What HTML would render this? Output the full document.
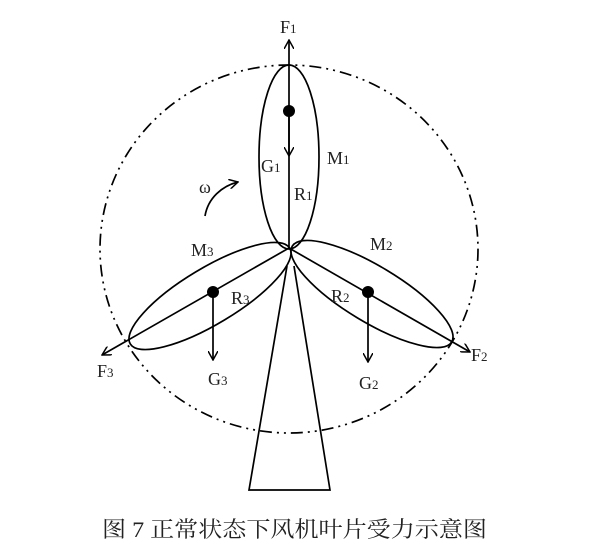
<!DOCTYPE html>
<html><head><meta charset="utf-8"><style>
html,body{margin:0;padding:0;background:#fff;width:598px;height:540px;overflow:hidden}
svg{display:block}
text{font-family:"Liberation Serif","Noto Serif CJK SC",serif;fill:#222}
</style></head><body>
<svg width="598" height="540" viewBox="0 0 598 540" xmlns="http://www.w3.org/2000/svg">
<defs><marker id="a" viewBox="0 0 10 10" refX="9" refY="5" markerWidth="10" markerHeight="10" markerUnits="userSpaceOnUse" orient="auto"><path d="M0,0 L9,5 L0,10" fill="none" stroke="#000" stroke-width="1.5"/></marker></defs>
<g fill="none" stroke="#000" stroke-width="1.7">
<ellipse cx="289" cy="249" rx="189" ry="184" stroke-dasharray="12,5,2,5,2,5"/>
<ellipse cx="289" cy="157" rx="30" ry="92"/>
<ellipse cx="210" cy="296" rx="93" ry="28" transform="rotate(-31 210 296)"/>
<ellipse cx="372" cy="294" rx="93" ry="28" transform="rotate(31 372 294)"/>
<path d="M287,266 L249,490 L330,490 L294,266"/>
<line x1="289" y1="248" x2="289" y2="40" marker-end="url(#a)"/>
<line x1="289" y1="111" x2="289" y2="156" marker-end="url(#a)"/>
<line x1="289" y1="248" x2="102" y2="355" marker-end="url(#a)"/>
<line x1="289" y1="248" x2="470" y2="352" marker-end="url(#a)"/>
<line x1="213" y1="292" x2="213" y2="360" marker-end="url(#a)"/>
<line x1="368" y1="292" x2="368" y2="362" marker-end="url(#a)"/>
<path d="M205,216 C208,198 222,186 238,182" marker-end="url(#a)"/>
</g>
<circle cx="289" cy="111" r="6"/><circle cx="213" cy="292" r="6"/><circle cx="368" cy="292" r="6"/>
<g font-size="18">
<text x="280" y="33">F<tspan font-size="13">1</tspan></text>
<text x="261" y="172">G<tspan font-size="13">1</tspan></text>
<text x="327" y="164">M<tspan font-size="13">1</tspan></text>
<text x="294" y="200">R<tspan font-size="13">1</tspan></text>
<text x="199" y="193">ω</text>
<text x="191" y="256">M<tspan font-size="13">3</tspan></text>
<text x="370" y="250">M<tspan font-size="13">2</tspan></text>
<text x="231" y="304">R<tspan font-size="13">3</tspan></text>
<text x="331" y="302">R<tspan font-size="13">2</tspan></text>
<text x="97" y="377">F<tspan font-size="13">3</tspan></text>
<text x="208" y="385">G<tspan font-size="13">3</tspan></text>
<text x="359" y="389">G<tspan font-size="13">2</tspan></text>
<text x="471" y="361">F<tspan font-size="13">2</tspan></text>
</g>
<text x="102" y="537" font-size="22" textLength="385" lengthAdjust="spacingAndGlyphs">图 7 正常状态下风机叶片受力示意图</text>
</svg>
</body></html>
